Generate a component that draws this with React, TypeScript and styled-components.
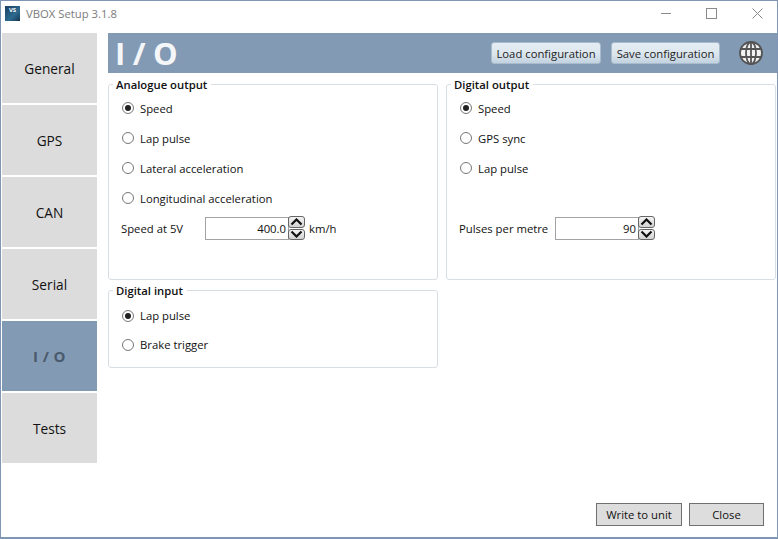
import React from 'react';
import styled, { createGlobalStyle } from 'styled-components';

const GlobalStyle = createGlobalStyle`
  html, body {
    margin: 0;
    padding: 0;
    background: #fff;
  }
  * {
    box-sizing: border-box;
  }
`;

const Window = styled.div`
  width: 778px;
  height: 539px;
  display: flex;
  flex-direction: column;
  background: #fff;
  border: 1px solid #7f97b5;
  border-bottom-width: 2px;
  font-family: "Open Sans", "Noto Sans", sans-serif;
  font-size: 11.3px;
  color: #111;
`;

const TitleBar = styled.div`
  height: 32px;
  flex: none;
  display: flex;
  align-items: center;
  padding: 0 0 7px 4px;
`;

const AppIcon = styled.div`
  width: 15px;
  height: 15px;
  margin-bottom: 1px;
  background: linear-gradient(135deg, #1d3f5e 0%, #2c6a90 60%, #173650 100%);
  color: #fff;
  font-size: 6px;
  font-weight: 700;
  line-height: 8px;
  text-align: center;
`;

const Title = styled.div`
  margin-left: 6px;
  color: #7b7b7b;
  font-size: 11.3px;
`;

const WindowControls = styled.div`
  margin-left: auto;
  display: flex;
  align-items: center;
  gap: 35px;
  padding: 0 14px 1px 0;
`;

const Body = styled.div`
  flex: 1;
  display: flex;
  min-height: 0;
`;

const Sidebar = styled.nav`
  width: 95px;
  margin-left: 1px;
  flex: none;
  display: flex;
  flex-direction: column;
  gap: 2px;
`;

const SideItem = styled.div<{ $active?: boolean }>`
  height: 70px;
  display: flex;
  align-items: center;
  justify-content: center;
  background: ${p => (p.$active ? '#839ab5' : '#dcdcdc')};
  color: ${p => (p.$active ? '#4a5a6c' : '#111')};
  font-size: ${p => (p.$active ? '15px' : '13.7px')};
  font-weight: ${p => (p.$active ? 700 : 400)};
  letter-spacing: ${p => (p.$active ? '0.4px' : '0')};
`;

const Main = styled.main`
  flex: 1;
  margin-left: 11px;
  min-width: 0;
  display: flex;
  flex-direction: column;
`;

const Header = styled.header`
  height: 40px;
  flex: none;
  display: flex;
  align-items: center;
  background: #839ab5;
  padding: 0 14px 0 7px;
`;

const Heading = styled.h1`
  margin: 0;
  color: #f4f6f8;
  font-size: 31px;
  font-weight: 700;
  letter-spacing: -0.3px;
  line-height: 40px;
`;

const HeaderButton = styled.button`
  height: 22px;
  padding: 0;
  border: 1px solid #a9bccd;
  border-radius: 3px;
  background: linear-gradient(#e6eef4 0%, #dce6ee 55%, #c2d2df 100%);
  color: #222;
  font: inherit;
`;

const LoadButton = styled(HeaderButton)`
  margin-left: auto;
  width: 110px;
`;

const SaveButton = styled(HeaderButton)`
  margin-left: 10px;
  width: 109px;
`;

const GlobeIcon = styled.svg`
  margin-left: 19px;
  display: block;
`;

const Panels = styled.div`
  display: grid;
  grid-template-columns: 330px 330px;
  column-gap: 8px;
  row-gap: 1px;
  padding-top: 2px;
  align-items: start;
`;

const Group = styled.fieldset<{ $height: number }>`
  margin: 0;
  padding: 0 0 0 12px;
  height: ${p => p.$height}px;
  border: 1px solid #d8dfe4;
  border-radius: 3px;
  min-width: 0;
`;

const GroupTitle = styled.legend`
  margin-left: -8px;
  padding: 2px 4px 0 3px;
  font-size: 11.3px;
  font-weight: 600;
  color: #111;
  line-height: 16px;
`;

const Option = styled.label<{ $step: number }>`
  height: ${p => p.$step}px;
  display: flex;
  align-items: center;
  gap: 6px;
`;

const Options = styled.div<{ $top?: number }>`
  padding-top: ${p => p.$top ?? 0}px;
`;

const RadioMark = styled.span<{ $on?: boolean }>`
  width: 12px;
  height: 12px;
  border: 1px solid #777;
  border-radius: 50%;
  display: flex;
  align-items: center;
  justify-content: center;
  margin-left: 1px;
  background: #fff;
  &::after {
    content: '';
    width: 6px;
    height: 6px;
    border-radius: 50%;
    background: ${p => (p.$on ? '#222' : 'transparent')};
  }
`;

const FieldRow = styled.div<{ $labelWidth: number }>`
  display: flex;
  align-items: center;
  height: 24px;
  margin-top: 3px;
  & > span:first-child {
    width: ${p => p.$labelWidth}px;
    flex: none;
  }
`;

const NumberBox = styled.div`
  width: 84px;
  height: 23px;
  border: 1px solid #a3a3a3;
  display: flex;
  align-items: center;
  justify-content: flex-end;
  padding-right: 2px;
  color: #111;
`;

const Spinner = styled.div`
  width: 17px;
  height: 24px;
  margin-left: -1px;
  display: flex;
  flex-direction: column;
  gap: 1px;
`;

const SpinButton = styled.div`
  flex: 1;
  border: 1px solid #666;
  border-radius: 3px;
  background: linear-gradient(#f4f4f4, #d2d2d2);
  display: flex;
  align-items: center;
  justify-content: center;
`;

const Unit = styled.span`
  margin-left: 4px;
`;

const Spacer = styled.div`
  height: 30px;
`;

const Footer = styled.footer`
  margin-top: auto;
  display: flex;
  justify-content: flex-end;
  gap: 7px;
  padding: 0 13px 11px 0;
`;

const FooterButton = styled.button<{ $width: number }>`
  width: ${p => p.$width}px;
  height: 23px;
  padding: 0;
  border: 1px solid #707070;
  background: #dddddd;
  color: #111;
  font: inherit;
`;

const Radio: React.FC<{ label: string; on?: boolean; step?: number }> = ({ label, on, step = 30 }) => (
  <Option $step={step}>
    <RadioMark $on={on} />
    {label}
  </Option>
);

const Spin: React.FC = () => (
  <Spinner>
    <SpinButton>
      <svg width="13" height="8" viewBox="0 0 13 8">
        <path d="M1.5 6.5 L6.5 1.5 L11.5 6.5" fill="none" stroke="#111" strokeWidth="2.2" />
      </svg>
    </SpinButton>
    <SpinButton>
      <svg width="13" height="8" viewBox="0 0 13 8">
        <path d="M1.5 1.5 L6.5 6.5 L11.5 1.5" fill="none" stroke="#111" strokeWidth="2.2" />
      </svg>
    </SpinButton>
  </Spinner>
);

const App: React.FC = () => (
  <>
    <GlobalStyle />
    <Window>
      <TitleBar>
        <AppIcon>VS</AppIcon>
        <Title>VBOX Setup 3.1.8</Title>
        <WindowControls>
          <svg width="10" height="10" viewBox="0 0 10 10">
            <path d="M0 5.5 H10" stroke="#8a8a8a" />
          </svg>
          <svg width="11" height="11" viewBox="0 0 11 11">
            <rect x="0.5" y="0.5" width="10" height="10" fill="none" stroke="#8a8a8a" />
          </svg>
          <svg width="11" height="11" viewBox="0 0 11 11">
            <path d="M0.5 0.5 L10.5 10.5 M10.5 0.5 L0.5 10.5" stroke="#8a8a8a" />
          </svg>
        </WindowControls>
      </TitleBar>
      <Body>
        <Sidebar>
          <SideItem>General</SideItem>
          <SideItem>GPS</SideItem>
          <SideItem>CAN</SideItem>
          <SideItem>Serial</SideItem>
          <SideItem $active>I / O</SideItem>
          <SideItem>Tests</SideItem>
        </Sidebar>
        <Main>
          <Header>
            <Heading>I / O</Heading>
            <LoadButton>Load configuration</LoadButton>
            <SaveButton>Save configuration</SaveButton>
            <GlobeIcon width="24" height="24" viewBox="0 0 24 24">
              <circle cx="12" cy="12" r="11" fill="#f2f2f2" stroke="#555" strokeWidth="1.8" />
              <ellipse cx="12" cy="12" rx="5" ry="11" fill="none" stroke="#555" strokeWidth="1.8" />
              <path d="M12 1 V23 M1.5 8 H22.5 M1.5 16 H22.5" stroke="#555" strokeWidth="1.8" />
            </GlobeIcon>
          </Header>
          <Panels>
            <Group $height={205}>
              <GroupTitle>Analogue output</GroupTitle>
              <Options>
                <Radio label="Speed" on />
                <Radio label="Lap pulse" />
                <Radio label="Lateral acceleration" />
                <Radio label="Longitudinal acceleration" />
              </Options>
              <FieldRow $labelWidth={84}>
                <span>Speed at 5V</span>
                <NumberBox>400.0</NumberBox>
                <Spin />
                <Unit>km/h</Unit>
              </FieldRow>
            </Group>
            <Group $height={205}>
              <GroupTitle>Digital output</GroupTitle>
              <Options>
                <Radio label="Speed" on />
                <Radio label="GPS sync" />
                <Radio label="Lap pulse" />
                <Spacer />
              </Options>
              <FieldRow $labelWidth={96}>
                <span>Pulses per metre</span>
                <NumberBox>90</NumberBox>
                <Spin />
              </FieldRow>
            </Group>
            <Group $height={87}>
              <GroupTitle>Digital input</GroupTitle>
              <Options $top={2}>
                <Radio label="Lap pulse" on step={29} />
                <Radio label="Brake trigger" step={29} />
              </Options>
            </Group>
          </Panels>
          <Footer>
            <FooterButton $width={86}>Write to unit</FooterButton>
            <FooterButton $width={75}>Close</FooterButton>
          </Footer>
        </Main>
      </Body>
    </Window>
  </>
);

export default App;
